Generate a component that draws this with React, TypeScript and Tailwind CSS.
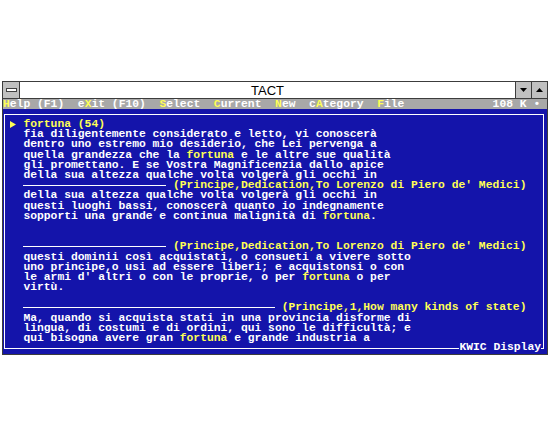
import React from 'react';

const mono = { fontFamily: '"Liberation Mono", "DejaVu Sans Mono", monospace' };

function Y({ children }: { children: React.ReactNode }) {
  return <span className="text-[#ffff55]">{children}</span>;
}

function Row({ children }: { children?: React.ReactNode }) {
  return <div className="h-[10.2px] leading-[10.2px] whitespace-pre">{children}</div>;
}

function Sep({ lineClass, cite }: { lineClass: string; cite: string }) {
  return (
    <div className="flex h-[10.2px] items-center leading-[10.2px] whitespace-pre">
      <span className="w-[2ch] shrink-0" />
      <span className={`h-px bg-white shrink-0 ${lineClass}`} />
      <span className="text-[#ffff55]"> {cite}</span>
    </div>
  );
}

const menu = [
  { key: 'H', rest: 'elp (F1)', pre: '' },
  { key: 'X', rest: 'it (F10)', pre: 'e' },
  { key: 'S', rest: 'elect', pre: '' },
  { key: 'C', rest: 'urrent', pre: '' },
  { key: 'N', rest: 'ew', pre: '' },
  { key: 'A', rest: 'tegory', pre: 'c' },
  { key: 'F', rest: 'ile', pre: '' },
];

export default function App() {
  return (
    <div className="min-h-[440px] w-[550px] bg-white pt-[81px]">
      <div className="ml-[2px] w-[546px] border border-[#3c3c3c]">
        {/* title bar */}
        <div className="flex h-[17px] border-b border-[#3c3c3c] bg-white">
          <div className="flex w-[17px] items-center justify-center border-r border-[#3c3c3c] bg-[#c0c0c0]">
            <div className="h-[4px] w-[11px] border border-[#404040] bg-white" />
          </div>
          <div
            className="flex-1 text-center text-[13px] leading-[17px] text-black"
            style={{ fontFamily: '"Liberation Sans", Arial, sans-serif' }}
          >
            TACT
          </div>
          <div className="flex w-[16px] items-center justify-center border-l border-[#3c3c3c] bg-[#c0c0c0]">
            <svg width="7" height="4" viewBox="0 0 7 4"><path d="M0 0h7L3.5 4z" fill="#000" /></svg>
          </div>
          <div className="flex w-[16px] items-center justify-center border-l border-[#3c3c3c] bg-[#c0c0c0]">
            <svg width="7" height="4" viewBox="0 0 7 4"><path d="M0 4h7L3.5 0z" fill="#000" /></svg>
          </div>
        </div>

        <div className="text-[11.33px] font-bold" style={mono}>
          {/* menu row */}
          <div className="flex h-[10.2px] bg-[#a8a8a8] leading-[10.2px] whitespace-pre text-white">
            {menu.map((m, i) => (
              <span key={m.key}>
                {m.pre}
                <span className="text-[#ffff55]">{m.key}</span>
                {m.rest}
                {i < menu.length - 1 ? '  ' : ''}
              </span>
            ))}
            <span className="flex-1" />
            <span>108 K • </span>
          </div>

          {/* KWIC panel */}
          <div className="bg-[#1414aa] pt-[4.5px] pr-[3px] pb-[5px] pl-[1px] text-white">
            <div className="relative border border-white pt-[4.4px] pb-[4.7px] pl-[4.8px]">
              <div className="flex h-[10.2px] items-center leading-[10.2px] whitespace-pre">
                <span className="flex w-[1ch] justify-center">
                  <svg width="6" height="7" viewBox="0 0 6 7"><path d="M0 0L6 3.5L0 7z" fill="#ffff55" /></svg>
                </span>
                <span> </span>
                <Y>fortuna (54)</Y>
              </div>
              <Row>  fia diligentemente considerato e letto, vi conoscerà</Row>
              <Row>  dentro uno estremo mio desiderio, che Lei pervenga a</Row>
              <Row>  quella grandezza che la <Y>fortuna</Y> e le altre sue qualità</Row>
              <Row>  gli promettano. E se Vostra Magnificenzia dallo apice</Row>
              <Row>  della sua altezza qualche volta volgerà gli occhi in</Row>
              <Sep lineClass="w-[21ch]" cite="(Principe,Dedication,To Lorenzo di Piero de' Medici)" />
              <Row>  della sua altezza qualche volta volgerà gli occhi in</Row>
              <Row>  questi luoghi bassi, conoscerà quanto io indegnamente</Row>
              <Row>  sopporti una grande e continua malignità di <Y>fortuna</Y>.</Row>
              <Row />
              <Row />
              <Sep lineClass="w-[21ch]" cite="(Principe,Dedication,To Lorenzo di Piero de' Medici)" />
              <Row>  questi dominii così acquistati, o consueti a vivere sotto</Row>
              <Row>  uno principe,o usi ad essere liberi; e acquistonsi o con</Row>
              <Row>  le armi d' altri o con le proprie, o per <Y>fortuna</Y> o per</Row>
              <Row>  virtù.</Row>
              <Row />
              <Sep lineClass="w-[37ch]" cite="(Principe,1,How many kinds of state)" />
              <Row>  Ma, quando si acquista stati in una provincia disforme di</Row>
              <Row>  lingua, di costumi e di ordini, qui sono le difficultà; e</Row>
              <Row>  qui bisogna avere gran <Y>fortuna</Y> e grande industria a</Row>

              <div className="absolute right-[2px] -bottom-[4.6px] h-[10.2px] bg-[#1414aa] leading-[10.2px] whitespace-pre">
                KWIC Display
              </div>
            </div>
          </div>
        </div>
      </div>
    </div>
  );
}
